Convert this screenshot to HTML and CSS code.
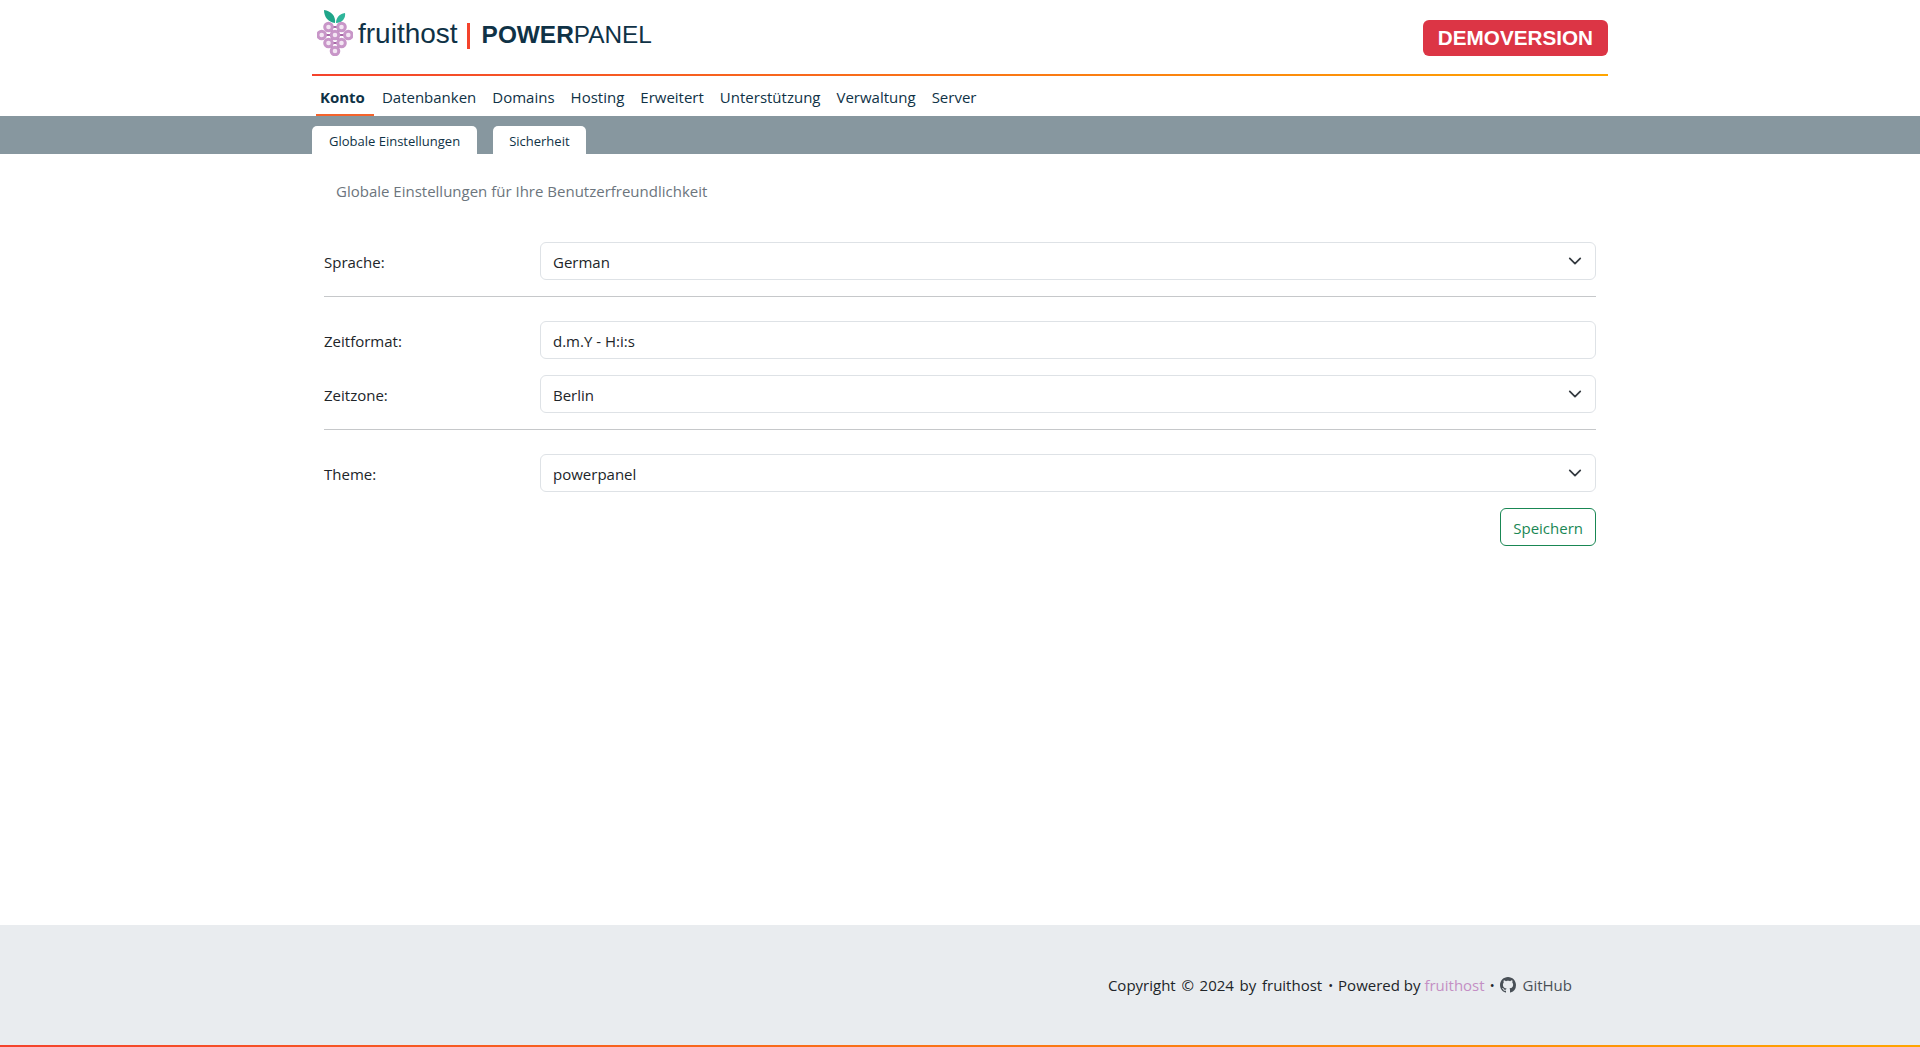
FILE: index.html
```html
<!DOCTYPE html>
<html lang="de">
<head>
  <meta charset="UTF-8" />
  <title>fruithost | PowerPanel</title>
  <link rel="stylesheet" href="styles.css">
</head>
<body>
  <header class="top container">
    <div class="brand">
      <svg class="logo" viewBox="0 0 36 46" width="36" height="46">
        <path d="M18 13 C11 12 7 7 7 0 C14 1 19 6 18 13Z" fill="#1fa589"/>
        <path d="M19 13 C19 8 22 4 28 3 C29 8 25 13 19 13Z" fill="#2fb59a"/>
        <g fill="none" stroke="#a86aa8" stroke-width="2">
          <path d="M11.5 17h13M4.7 25h26.6M11.5 33h13M18 25l-6.5-8M18 25l6.5-8M18 25l-6.5 8M18 25l6.5 8M11.5 33l6.5 8M24.500 33l-6.500 8"/>
        </g>
        <g fill="#f3e6f3" stroke="#c896c8" stroke-width="3">
          <circle cx="11.500" cy="17" r="3.800"/>
          <circle cx="24.500" cy="17" r="3.800"/>
          <circle cx="4.700" cy="25" r="3.800"/>
          <circle cx="18" cy="25" r="3.800"/>
          <circle cx="31.300" cy="25" r="3.800"/>
          <circle cx="11.500" cy="33" r="3.800"/>
          <circle cx="24.500" cy="33" r="3.800"/>
          <circle cx="18" cy="41" r="3.800"/>
        </g>
      </svg>
      <span class="brand-host">fruithost</span>
      <span class="brand-sep"></span>
      <span class="brand-panel"><b>POWER</b>PANEL</span>
    </div>
    <div class="demo">DEMOVERSION</div>
  </header>

  <div class="container">
    <div class="rainbow"></div>
    <nav class="main-nav">
      <a class="active" href="#">Konto</a>
      <a href="#">Datenbanken</a>
      <a href="#">Domains</a>
      <a href="#">Hosting</a>
      <a href="#">Erweitert</a>
      <a href="#">Unterstützung</a>
      <a href="#">Verwaltung</a>
      <a href="#">Server</a>
    </nav>
  </div>

  <div class="sub-bar">
    <div class="container tabs">
      <a href="#">Globale Einstellungen</a>
      <a href="#">Sicherheit</a>
    </div>
  </div>

  <main class="container content">
    <p class="lead">Globale Einstellungen für Ihre Benutzerfreundlichkeit</p>

    <form class="settings">
      <div class="row">
        <label>Sprache:</label>
        <div class="field select">German<svg viewBox="0 0 16 16" width="14" height="14"><path d="M2 5l6 6 6-6" fill="none" stroke="#343a40" stroke-width="2" stroke-linecap="round" stroke-linejoin="round"/></svg></div>
      </div>
      <hr>
      <div class="row">
        <label>Zeitformat:</label>
        <div class="field">d.m.Y - H:i:s</div>
      </div>
      <div class="row">
        <label>Zeitzone:</label>
        <div class="field select">Berlin<svg viewBox="0 0 16 16" width="14" height="14"><path d="M2 5l6 6 6-6" fill="none" stroke="#343a40" stroke-width="2" stroke-linecap="round" stroke-linejoin="round"/></svg></div>
      </div>
      <hr>
      <div class="row">
        <label>Theme:</label>
        <div class="field select">powerpanel<svg viewBox="0 0 16 16" width="14" height="14"><path d="M2 5l6 6 6-6" fill="none" stroke="#343a40" stroke-width="2" stroke-linecap="round" stroke-linejoin="round"/></svg></div>
      </div>
      <div class="actions">
        <button type="button" class="btn-save">Speichern</button>
      </div>
    </form>
  </main>

  <footer>
    <div class="container foot-inner">
      <span class="copy">Copyright © 2024 by fruithost</span>
      <span class="dot">•</span>
      <span>Powered by <a class="fruit" href="#">fruithost</a></span>
      <span class="dot">•</span>
      <a class="gh" href="#">
        <svg viewBox="0 0 16 16" width="16" height="16"><path fill="#495057" d="M8 0C3.58 0 0 3.58 0 8c0 3.54 2.29 6.53 5.47 7.59.4.07.55-.17.55-.38 0-.19-.01-.82-.01-1.49-2.01.37-2.53-.49-2.69-.94-.09-.23-.48-.94-.82-1.13-.28-.15-.68-.52-.01-.53.63-.01 1.08.58 1.23.82.72 1.21 1.87.87 2.33.66.07-.52.28-.87.51-1.07-1.78-.2-3.64-.89-3.64-3.95 0-.87.31-1.59.82-2.15-.08-.2-.36-1.02.08-2.12 0 0 .67-.21 2.2.82.64-.18 1.32-.27 2-.27s1.36.09 2 .27c1.53-1.04 2.2-.82 2.2-.82.44 1.1.16 1.92.08 2.12.51.56.82 1.27.82 2.15 0 3.07-1.87 3.75-3.65 3.95.29.25.54.73.54 1.48 0 1.07-.01 1.93-.01 2.2 0 .21.15.46.55.38A8.01 8.01 0 0 0 16 8c0-4.42-3.58-8-8-8z"/></svg>
        GitHub
      </a>
    </div>
  </footer>
</body>
</html>
```

FILE: styles.css
```css
* {
  box-sizing: border-box;
}

html, body {
  height: 100%;
}

body {
  margin: 0;
  display: flex;
  flex-direction: column;
  font-family: "Open Sans", "Noto Sans", sans-serif;
  font-size: 15px;
  color: #212529;
  background: #fff;
}

a {
  text-decoration: none;
}

.container {
  width: 1296px;
  margin: 0 auto;
}

/* header */
.top {
  height: 74px;
  display: flex;
  justify-content: space-between;
}

.brand {
  display: flex;
  align-items: flex-start;
  padding: 10px 0 0 5px;
  font-family: "Liberation Sans", Arial, sans-serif;
  font-size: 28px;
  line-height: 46px;
  color: #0f3246;
}

.logo {
  margin-right: 5px;
}

.brand-host {
  margin-top: 1px;
}

.brand-sep {
  width: 3px;
  height: 26px;
  margin: 13px 12px 0 9px;
  background: #f4432c;
}

.brand-panel {
  margin-top: 2px;
  font-size: 24.4px;
}

.demo {
  height: 36px;
  margin-top: 20px;
  padding: 0 15px;
  border-radius: 6px;
  background: #dc3545;
  color: #fff;
  font: bold 20.7px/36px "Liberation Sans", Arial, sans-serif;
}

.rainbow {
  height: 2px;
  background: linear-gradient(to right, #f4432c, #ffa500);
}

/* main navigation */
.main-nav {
  height: 40px;
  display: flex;
  gap: 16px;
  padding-left: 8px;
}

.main-nav a {
  line-height: 43px;
  color: #0f3246;
}

.main-nav .active {
  height: 40px;
  margin: 0 -8px 0 -4px;
  padding: 0 9px 0 4px;
  font-weight: 700;
  border-bottom: 2px solid #f4632c;
}

.sub-bar {
  height: 38px;
  background: #87979f;
}

.tabs {
  display: flex;
  gap: 16px;
  padding-top: 10px;
}

.tabs a {
  height: 28px;
  padding: 0 17px;
  border-radius: 5px 5px 0 0;
  background: #fff;
  color: #0f3246;
  font-size: 13px;
  line-height: 30px;
}

.tabs a:last-child {
  padding: 0 16px;
}

/* form */
.content {
  flex: 1;
}

.lead {
  margin: 0;
  padding: 26px 0 0 24px;
  line-height: 22px;
  color: #6c757d;
}

.settings {
  padding: 40px 12px 0;
}

.row {
  display: flex;
  align-items: center;
  margin-bottom: 16px;
}

.row label {
  width: 216px;
  padding-top: 1px;
}

.field {
  flex: 1;
  height: 38px;
  padding: 1px 13px 0 12px;
  display: flex;
  align-items: center;
  justify-content: space-between;
  border: 1px solid #dee2e6;
  border-radius: 6px;
}

.field svg {
  margin-top: -2px;
}

.settings hr {
  margin: 16px 0 24px;
  border: 0;
  border-top: 1px solid #c6c8ca;
}

.actions {
  display: flex;
  justify-content: flex-end;
}

.btn-save {
  height: 38px;
  padding: 1px 12px 0;
  border: 1px solid #198754;
  border-radius: 6px;
  background: #fff;
  color: #198754;
  font: inherit;
}

/* footer */
footer {
  height: 122px;
  border-bottom: 2px solid;
  border-image: linear-gradient(to right, #f4432c, #ffa500) 1;
  background: #e9ecef;
}

.foot-inner {
  height: 100%;
  display: flex;
  align-items: center;
  justify-content: flex-end;
  gap: 5px;
  padding-right: 36px;
  color: #212529;
}

.copy {
  margin-right: 1px;
  word-spacing: 1.8px;
}

.dot {
  font-size: 13px;
}

.fruit {
  color: #c48fc4;
}

.gh {
  display: flex;
  align-items: center;
  gap: 7px;
  color: #495057;
}
```
